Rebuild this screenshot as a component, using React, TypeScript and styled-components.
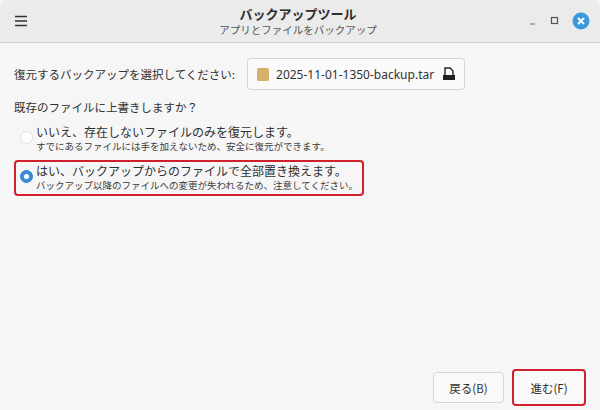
import React from "react";
import styled, { createGlobalStyle } from "styled-components";

const G = createGlobalStyle`
  html,body{margin:0;padding:0;width:600px;height:410px;overflow:hidden;background:#f6f6f6;}
  *{box-sizing:border-box;}
  body{font-family:"Noto Sans CJK JP","Noto Sans",sans-serif;color:#303030;}
`;
const Win = styled.div`width:600px;height:410px;display:flex;flex-direction:column;background:#f6f6f6;`;
const Header = styled.div`height:43px;background:#ebebeb;border-bottom:1px solid #d2d2d2;display:flex;align-items:center;padding:0 10px 0 14px;border-radius:8px 8px 0 0;`;
const Titles = styled.div`flex:1;display:flex;flex-direction:column;align-items:center;line-height:1.25;margin-left:40px;`;
const Title = styled.div`font-size:13px;font-weight:700;color:#2e2e2e;`;
const Sub = styled.div`font-size:10.5px;color:#555;`;
const Ctrls = styled.div`display:flex;align-items:center;gap:12px;`;
const Body = styled.div`flex:1;display:flex;flex-direction:column;padding:15px 14px 4px 14px;`;
const Row = styled.div`display:flex;align-items:center;gap:12px;font-size:11.5px;white-space:nowrap;`;
const FileBtn = styled.div`height:32px;border:1px solid #d5d5d5;border-radius:4px;background:#fafafa;display:flex;align-items:center;gap:6px;padding:0 8px;font-family:"Noto Sans",sans-serif;font-size:12px;color:#333;width:218px;white-space:nowrap;`;
const Q = styled.div`font-size:11.5px;margin-top:9px;`;
const Opt = styled.div<{ $sel?: boolean }>`display:flex;gap:3px;padding:1px 4px 2px;margin-top:${p => p.$sel ? "3px" : "6px"};width:fit-content;white-space:nowrap;border:${p => p.$sel ? "2px solid #d0202e" : "2px solid transparent"};border-radius:4px;`;
const Dot = styled.div<{ $sel?: boolean }>`width:13px;height:13px;border-radius:50%;margin-top:7px;flex:none;background:${p => p.$sel ? "#3a8ed8" : "#fff"};border:1px solid ${p => p.$sel ? "#2f7fc7" : "#ddd"};display:flex;align-items:center;justify-content:center;&::after{content:"";width:5px;height:5px;border-radius:50%;background:${p => p.$sel ? "#fff" : "transparent"};}`;
const OT = styled.div`font-size:12px;line-height:15px;color:#2e2e2e;`;
const OS = styled.div`font-size:9.5px;line-height:14px;color:#3a3a3a;`;
const Footer = styled.div`margin-top:auto;display:flex;justify-content:flex-end;align-items:center;gap:8px;`;
const Btn = styled.div<{ $hl?: boolean }>`height:${p => p.$hl ? "37px" : "31px"};width:${p => p.$hl ? "74px" : "71px"};border:${p => p.$hl ? "2px solid #d0202e" : "1px solid #d5d5d5"};border-radius:4px;background:#f9f9f9;display:flex;align-items:center;justify-content:center;font-size:11.5px;`;

export default function App() {
  return (
    <Win>
      <G />
      <Header>
        <svg width="14" height="12" viewBox="0 0 14 12"><path d="M1 1.5h12M1 6h12M1 10.5h12" stroke="#333" strokeWidth="1.5" /></svg>
        <Titles><Title>バックアップツール</Title><Sub>アプリとファイルをバックアップ</Sub></Titles>
        <Ctrls>
          <svg width="10" height="10"><path d="M2 8h5" stroke="#666" strokeWidth="1" /></svg>
          <svg width="10" height="10"><rect x="1.5" y="1.5" width="6" height="6" fill="none" stroke="#555" strokeWidth="1.2" /></svg>
          <svg width="18" height="18" viewBox="0 0 18 18"><circle cx="9" cy="9" r="8.5" fill="#3a98de" /><path d="M6 6l6 6M12 6l-6 6" stroke="#fff" strokeWidth="2" /></svg>
        </Ctrls>
      </Header>
      <Body>
        <Row>
          <span>復元するバックアップを選択してください:</span>
          <FileBtn>
            <svg width="14" height="15"><rect x="1" y="1" width="12" height="13" rx="1.5" fill="#d7b06a" /></svg>
            <span style={{ flex: 1 }}>2025-11-01-1350-backup.tar</span>
            <svg width="14" height="14" viewBox="0 0 14 14"><path d="M3 1h5l3 3v5H3z" fill="none" stroke="#222" strokeWidth="1.4" /><rect x="1" y="8" width="12" height="5" fill="#222" /></svg>
          </FileBtn>
        </Row>
        <Q>既存のファイルに上書きしますか？</Q>
        <Opt>
          <Dot />
          <div><OT>いいえ、存在しないファイルのみを復元します。</OT><OS>すでにあるファイルには手を加えないため、安全に復元ができます。</OS></div>
        </Opt>
        <Opt $sel>
          <Dot $sel />
          <div><OT>はい、バックアップからのファイルで全部置き換えます。</OT><OS>バックアップ以降のファイルへの変更が失われるため、注意してください。</OS></div>
        </Opt>
        <Footer>
          <Btn>戻る(B)</Btn>
          <Btn $hl>進む(F)</Btn>
        </Footer>
      </Body>
    </Win>
  );
}
